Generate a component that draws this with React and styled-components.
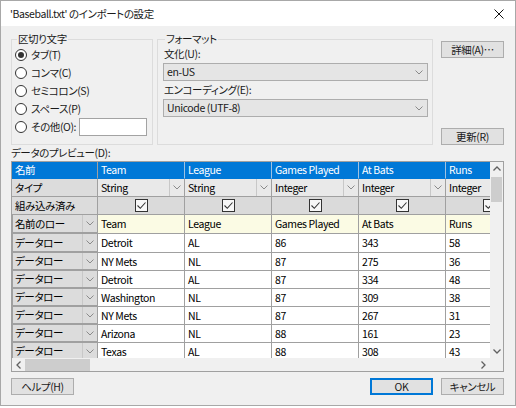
import React from "react";
import styled, { createGlobalStyle, css } from "styled-components";

const Global = createGlobalStyle`
  html, body { margin: 0; padding: 0; background: #ffffff; }
  body { font-family: "Noto Sans CJK JP", "Noto Sans", sans-serif; font-size: 11px; color: #000; }
  * { box-sizing: border-box; }
`;

const FONT = `"Noto Sans CJK JP", "Noto Sans", sans-serif`;

const Window = styled.div`
  width: 516px;
  height: 406px;
  border: 1px solid #a8a8a8;
  background: #f0f0f0;
  display: flex;
  flex-direction: column;
  font-family: ${FONT};
  font-size: 10.5px;
  letter-spacing: -0.4px;
  font-feature-settings: "palt";
  color: #1a1a1a;
`;

const TitleBar = styled.div`
  height: 25px;
  flex: none;
  background: #ffffff;
  display: flex;
  align-items: center;
  justify-content: space-between;
  padding: 0 6px 0 9px;
  line-height: 14px;
`;

const CloseBox = styled.div`
  width: 20px;
  height: 20px;
  display: flex;
  align-items: center;
  justify-content: center;
`;

const Body = styled.div`
  flex: 1;
  display: flex;
  flex-direction: column;
  padding: 0 11px 0 10px;
`;

const TopSection = styled.div`
  margin-top: 6px;
  height: 113px;
  display: flex;
  flex: none;
`;

const Group = styled.fieldset`
  margin: 0;
  min-width: 0;
  flex: none;
  width: ${(p) => p.$w}px;
  height: 113px;
  border: 1px solid #dcdcdc;
  padding: 0 ${(p) => p.$pr}px 0 ${(p) => p.$pl}px;
  display: flex;
  flex-direction: column;
  margin-right: ${(p) => p.$mr}px;
`;

const Legend = styled.legend`
  padding: 0 1px;
  margin-left: 2px;
  line-height: 14px;
`;

const RadioRow = styled.label`
  height: 18px;
  display: flex;
  align-items: center;
  line-height: 14px;
  white-space: nowrap;
`;

const RadioCircle = styled.span`
  width: 12px;
  height: 12px;
  border-radius: 50%;
  border: 1px solid #333;
  background: #fff;
  margin-right: 4px;
  display: flex;
  align-items: center;
  justify-content: center;
  flex: none;
  &::after {
    content: "";
    width: 6px;
    height: 6px;
    border-radius: 50%;
    background: ${(p) => (p.$on ? "#333" : "transparent")};
  }
`;

const OtherInput = styled.div`
  margin-left: auto;
  width: 68px;
  height: 18px;
  flex: none;
  background: #fff;
  border: 1px solid #a3a3a3;
`;

const FieldLabel = styled.div`
  height: 16px;
  line-height: 16px;
  margin-top: ${(p) => p.$mt || 0}px;
  padding-left: 1px;
`;

const Combo = styled.div`
  height: 18px;
  margin-top: 1px;
  background: #e5e5e5;
  border: 1px solid #adadad;
  display: flex;
  align-items: center;
  justify-content: space-between;
  padding: 0 4px 0 3px;
  line-height: 14px;
`;

const ButtonCol = styled.div`
  width: 63px;
  flex: none;
  display: flex;
  flex-direction: column;
  justify-content: space-between;
  padding-top: 9px;
`;

const Button = styled.div`
  height: 17px;
  width: ${(p) => p.$w || 63}px;
  background: #e1e1e1;
  border: 1px solid #adadad;
  display: flex;
  align-items: center;
  justify-content: center;
  line-height: 14px;
  ${(p) =>
    p.$default &&
    css`
      border-color: #0078d7;
      box-shadow: inset 0 0 0 1px #0078d7;
    `}
`;

const PreviewLabel = styled.div`
  height: 16px;
  line-height: 16px;
  flex: none;
`;

const GridFrame = styled.div`
  height: 211px;
  border: 1px solid #a0a0a0;
  background: #f0f0f0;
  display: grid;
  grid-template-columns: 478px 13px;
  grid-template-rows: 196px 13px;
  flex: none;
`;

const Viewport = styled.div`
  overflow: hidden;
  background: #fff;
  display: flex;
  flex-direction: column;
`;

const Row = styled.div`
  display: flex;
  height: ${(p) => p.$h}px;
  flex: none;
`;

const cellBg = {
  head: "#0078d7",
  type: "#e9e9e9",
  builtin: "#dadada",
  name: "#fbfbe4",
  data: "#ffffff",
};

const Cell = styled.div`
  flex: none;
  width: ${(p) => p.$w}px;
  height: 100%;
  background: ${(p) => cellBg[p.$kind]};
  color: ${(p) => (p.$kind === "head" ? "#ffffff" : "#000")};
  border-right: 1px solid ${(p) => (p.$kind === "head" ? "#9fc2e2" : "#a0a0a0")};
  border-bottom: 1px solid ${(p) => (p.$kind === "head" ? "#0078d7" : "#a0a0a0")};
  display: flex;
  align-items: center;
  justify-content: ${(p) => (p.$kind === "builtin" ? "center" : "flex-start")};
  padding-left: ${(p) => (p.$kind === "builtin" ? 0 : 3)}px;
  line-height: 14px;
  white-space: nowrap;
  overflow: hidden;
`;

const HeadCell = styled.div`
  flex: none;
  width: 86px;
  height: 100%;
  background: ${(p) => (p.$kind === "head" ? "#0078d7" : "#dcdcdc")};
  color: ${(p) => (p.$kind === "head" ? "#fff" : "#000")};
  border-right: 1px solid #a0a0a0;
  border-bottom: ${(p) => (p.$thick ? 2 : 1)}px solid ${(p) => (p.$kind === "head" ? "#0078d7" : "#a0a0a0")};
  border-left: ${(p) => (p.$thick ? "1px solid #a0a0a0" : "none")};
  display: flex;
  align-items: center;
  padding-left: ${(p) => (p.$thick ? 2 : 3)}px;
  line-height: 14px;
  white-space: nowrap;
`;

const CellText = styled.span`
  flex: 1;
  overflow: hidden;
`;

const Drop = styled.span`
  flex: none;
  width: 15px;
  height: 100%;
  border-left: 1px solid #c8c8c8;
  display: flex;
  align-items: center;
  justify-content: center;
`;

const Check = styled.span`
  width: 13px;
  height: 13px;
  border: 1px solid #333;
  background: #f7f7f7;
  display: flex;
  align-items: center;
  justify-content: center;
  flex: none;
`;

const VScroll = styled.div`
  background: #f0f0f0;
  display: flex;
  flex-direction: column;
  align-items: center;
`;

const HScroll = styled.div`
  background: #f0f0f0;
  display: flex;
  align-items: center;
`;

const Arrow = styled.div`
  width: 13px;
  height: 13px;
  flex: none;
  display: flex;
  align-items: center;
  justify-content: center;
`;

const VThumb = styled.div`
  width: 11px;
  height: 25px;
  background: #cdcdcd;
  margin-top: 2px;
`;

const HThumb = styled.div`
  height: 12px;
  width: 65px;
  background: #cdcdcd;
`;

const Spacer = styled.div`
  flex: 1;
`;

const Corner = styled.div`
  background: #f0f0f0;
`;

const Footer = styled.div`
  margin-top: 6px;
  display: flex;
  gap: 8px;
  flex: none;
`;

const Chevron = () => (
  <svg width="8" height="5" viewBox="0 0 8 5">
    <polyline points="0.5,0.5 4,4 7.5,0.5" fill="none" stroke="#8a8a8a" strokeWidth="1" />
  </svg>
);

const ArrowIcon = ({ dir }) => {
  const pts = {
    up: "0.5,4.5 4,1 7.5,4.5",
    down: "0.5,0.5 4,4 7.5,0.5",
    left: "4.5,0.5 1,4 4.5,7.5",
    right: "0.5,0.5 4,4 0.5,7.5",
  }[dir];
  const vertical = dir === "up" || dir === "down";
  return (
    <svg width={vertical ? 8 : 5} height={vertical ? 5 : 8} viewBox={vertical ? "0 0 8 5" : "0 0 5 8"}>
      <polyline points={pts} fill="none" stroke="#606060" strokeWidth="1.3" />
    </svg>
  );
};

const CheckMark = () => (
  <svg width="11" height="11" viewBox="0 0 11 11">
    <polyline points="1.5,5.5 4.3,8.3 9.5,2.5" fill="none" stroke="#333" strokeWidth="1.1" />
  </svg>
);

const cols = ["Team", "League", "Games Played", "At Bats", "Runs"];
const types = ["String", "String", "Integer", "Integer", "Integer"];
const data = [
  ["Detroit", "AL", "86", "343", "58"],
  ["NY Mets", "NL", "87", "275", "36"],
  ["Detroit", "AL", "87", "334", "48"],
  ["Washington", "NL", "87", "309", "38"],
  ["NY Mets", "NL", "87", "267", "31"],
  ["Arizona", "NL", "88", "161", "23"],
  ["Texas", "AL", "88", "308", "43"],
];
const radios = ["タブ(T)", "コンマ(C)", "セミコロン(S)", "スペース(P)"];

export default function App() {
  return (
    <>
      <Global />
      <Window>
        <TitleBar>
          <span>'Baseball.txt' のインポートの設定</span>
          <CloseBox>
            <svg width="10" height="10" viewBox="0 0 10 10">
              <path d="M0.5 0.5 L9.5 9.5 M9.5 0.5 L0.5 9.5" stroke="#111" strokeWidth="1" />
            </svg>
          </CloseBox>
        </TitleBar>
        <Body>
          <TopSection>
            <Group $w={142} $pl={3} $pr={5} $mr={4}>
              <Legend>区切り文字</Legend>
              {radios.map((r, i) => (
                <RadioRow key={r}>
                  <RadioCircle $on={i === 0} />
                  {r}
                </RadioRow>
              ))}
              <RadioRow>
                <RadioCircle />
                その他(O):
                <OtherInput />
              </RadioRow>
            </Group>
            <Group $w={276} $pl={5} $pr={4} $mr={8}>
              <Legend>フォーマット</Legend>
              <FieldLabel>文化(U):</FieldLabel>
              <Combo>
                <span>en-US</span>
                <Chevron />
              </Combo>
              <FieldLabel $mt={1}>エンコーディング(E):</FieldLabel>
              <Combo>
                <span>Unicode (UTF-8)</span>
                <Chevron />
              </Combo>
            </Group>
            <ButtonCol>
              <Button>詳細(A)…</Button>
              <Button>更新(R)</Button>
            </ButtonCol>
          </TopSection>
          <PreviewLabel>データのプレビュー(D):</PreviewLabel>
          <GridFrame>
            <Viewport>
              <Row $h={17}>
                <HeadCell $kind="head">名前</HeadCell>
                {cols.map((c) => (
                  <Cell key={c} $kind="head" $w={87}>
                    {c}
                  </Cell>
                ))}
              </Row>
              <Row $h={18}>
                <HeadCell>タイプ</HeadCell>
                {types.map((t, i) => (
                  <Cell key={i} $kind="type" $w={87}>
                    <CellText>{t}</CellText>
                    <Drop>
                      <Chevron />
                    </Drop>
                  </Cell>
                ))}
              </Row>
              <Row $h={18}>
                <HeadCell>組み込み済み</HeadCell>
                {cols.map((c) => (
                  <Cell key={c} $kind="builtin" $w={87}>
                    <Check>
                      <CheckMark />
                    </Check>
                  </Cell>
                ))}
              </Row>
              <Row $h={19}>
                <HeadCell $thick>
                  <CellText>名前のロー</CellText>
                  <Drop>
                    <Chevron />
                  </Drop>
                </HeadCell>
                {cols.map((c) => (
                  <Cell key={c} $kind="name" $w={87}>
                    {c}
                  </Cell>
                ))}
              </Row>
              {data.map((r, ri) => (
                <Row key={ri} $h={ri === 0 ? 19 : 18}>
                  <HeadCell $thick>
                    <CellText>データロー</CellText>
                    <Drop>
                      <Chevron />
                    </Drop>
                  </HeadCell>
                  {r.map((v, ci) => (
                    <Cell key={ci} $kind="data" $w={87}>
                      {v}
                    </Cell>
                  ))}
                </Row>
              ))}
            </Viewport>
            <VScroll>
              <Arrow>
                <ArrowIcon dir="up" />
              </Arrow>
              <VThumb />
              <Spacer />
              <Arrow>
                <ArrowIcon dir="down" />
              </Arrow>
            </VScroll>
            <HScroll>
              <Arrow>
                <ArrowIcon dir="left" />
              </Arrow>
              <HThumb />
              <Spacer />
              <Arrow>
                <ArrowIcon dir="right" />
              </Arrow>
            </HScroll>
            <Corner />
          </GridFrame>
          <Footer>
            <Button>ヘルプ(H)</Button>
            <Spacer />
            <Button $default>OK</Button>
            <Button>キャンセル</Button>
          </Footer>
        </Body>
      </Window>
    </>
  );
}
